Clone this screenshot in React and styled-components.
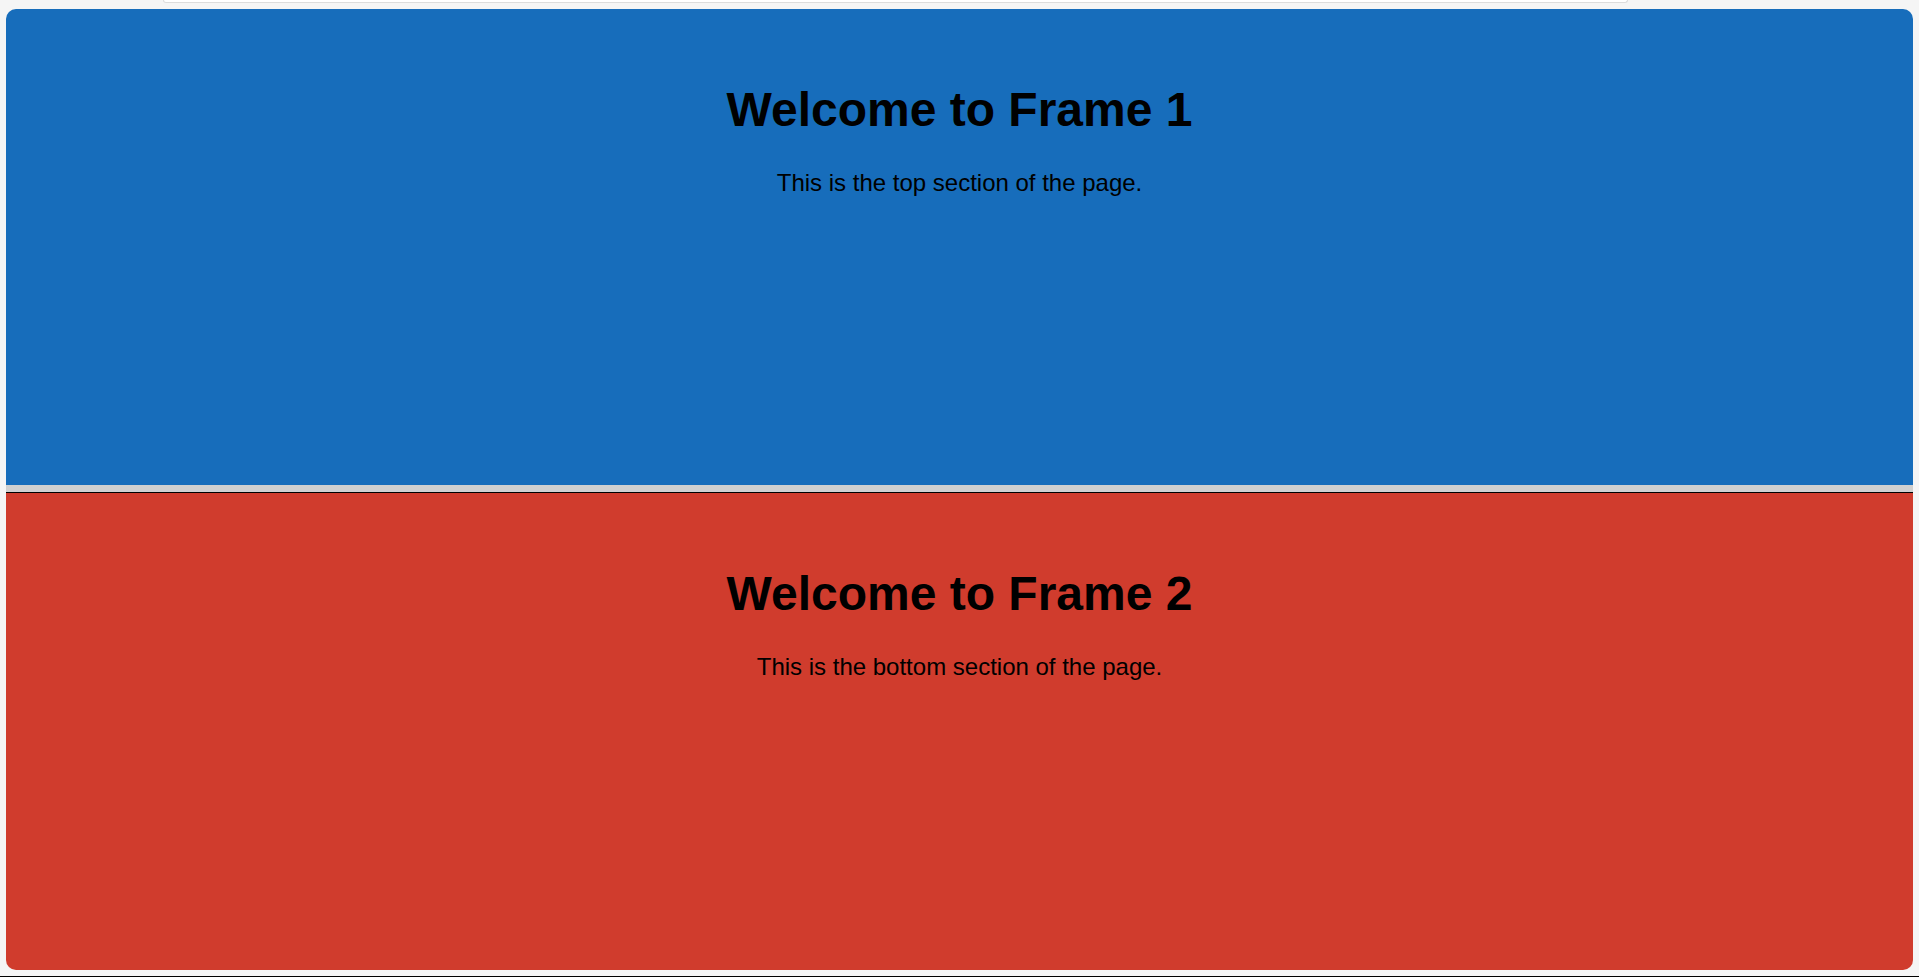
import styled, { createGlobalStyle } from "styled-components";

const GlobalStyle = createGlobalStyle`
  html, body {
    margin: 0;
    padding: 0;
    background: #f5f5f5;
    font-family: "Liberation Sans", Arial, sans-serif;
    overflow: hidden;
  }
`;

const Page = styled.div`
  height: 977px;
  display: flex;
  flex-direction: column;
  box-sizing: border-box;
  border-bottom: 1px solid #000;
  background: #f5f5f5;
`;

const SearchStub = styled.div`
  height: 3px;
  margin: 0 291px 0 163px;
  background: #fff;
  border: 1px solid #dcdcdc;
  border-top: none;
  border-radius: 0 0 10px 10px;
  box-sizing: border-box;
`;

const Shell = styled.div`
  margin: 6px 6px 0 6px;
  height: 961px;
  display: flex;
  flex-direction: column;
  border-radius: 10px;
  overflow: hidden;
`;

const Frame = styled.section`
  flex: ${(p) => p.$grow};
  background: ${(p) => p.$bg};
  text-align: center;
  padding-top: 41px;
  box-sizing: border-box;
  color: #000;

  h1 {
    font-size: 48px;
    font-weight: bold;
    margin: 32px 0;
  }

  p {
    font-size: 24px;
    margin: 24px 0;
  }
`;

const Divider = styled.div`
  height: 7px;
  background: #d0d0d0;
  border-bottom: 1px solid #000;
`;

const App = () => {
  return (
    <>
      <GlobalStyle />
      <Page>
        <SearchStub />
        <Shell>
          <Frame $bg="#176dbb" $grow="0 0 476px">
            <h1>Welcome to Frame 1</h1>
            <p>This is the top section of the page.</p>
          </Frame>
          <Divider />
          <Frame $bg="#d03c2d" $grow="1">
            <h1>Welcome to Frame 2</h1>
            <p>This is the bottom section of the page.</p>
          </Frame>
        </Shell>
      </Page>
    </>
  );
};

export default App;
